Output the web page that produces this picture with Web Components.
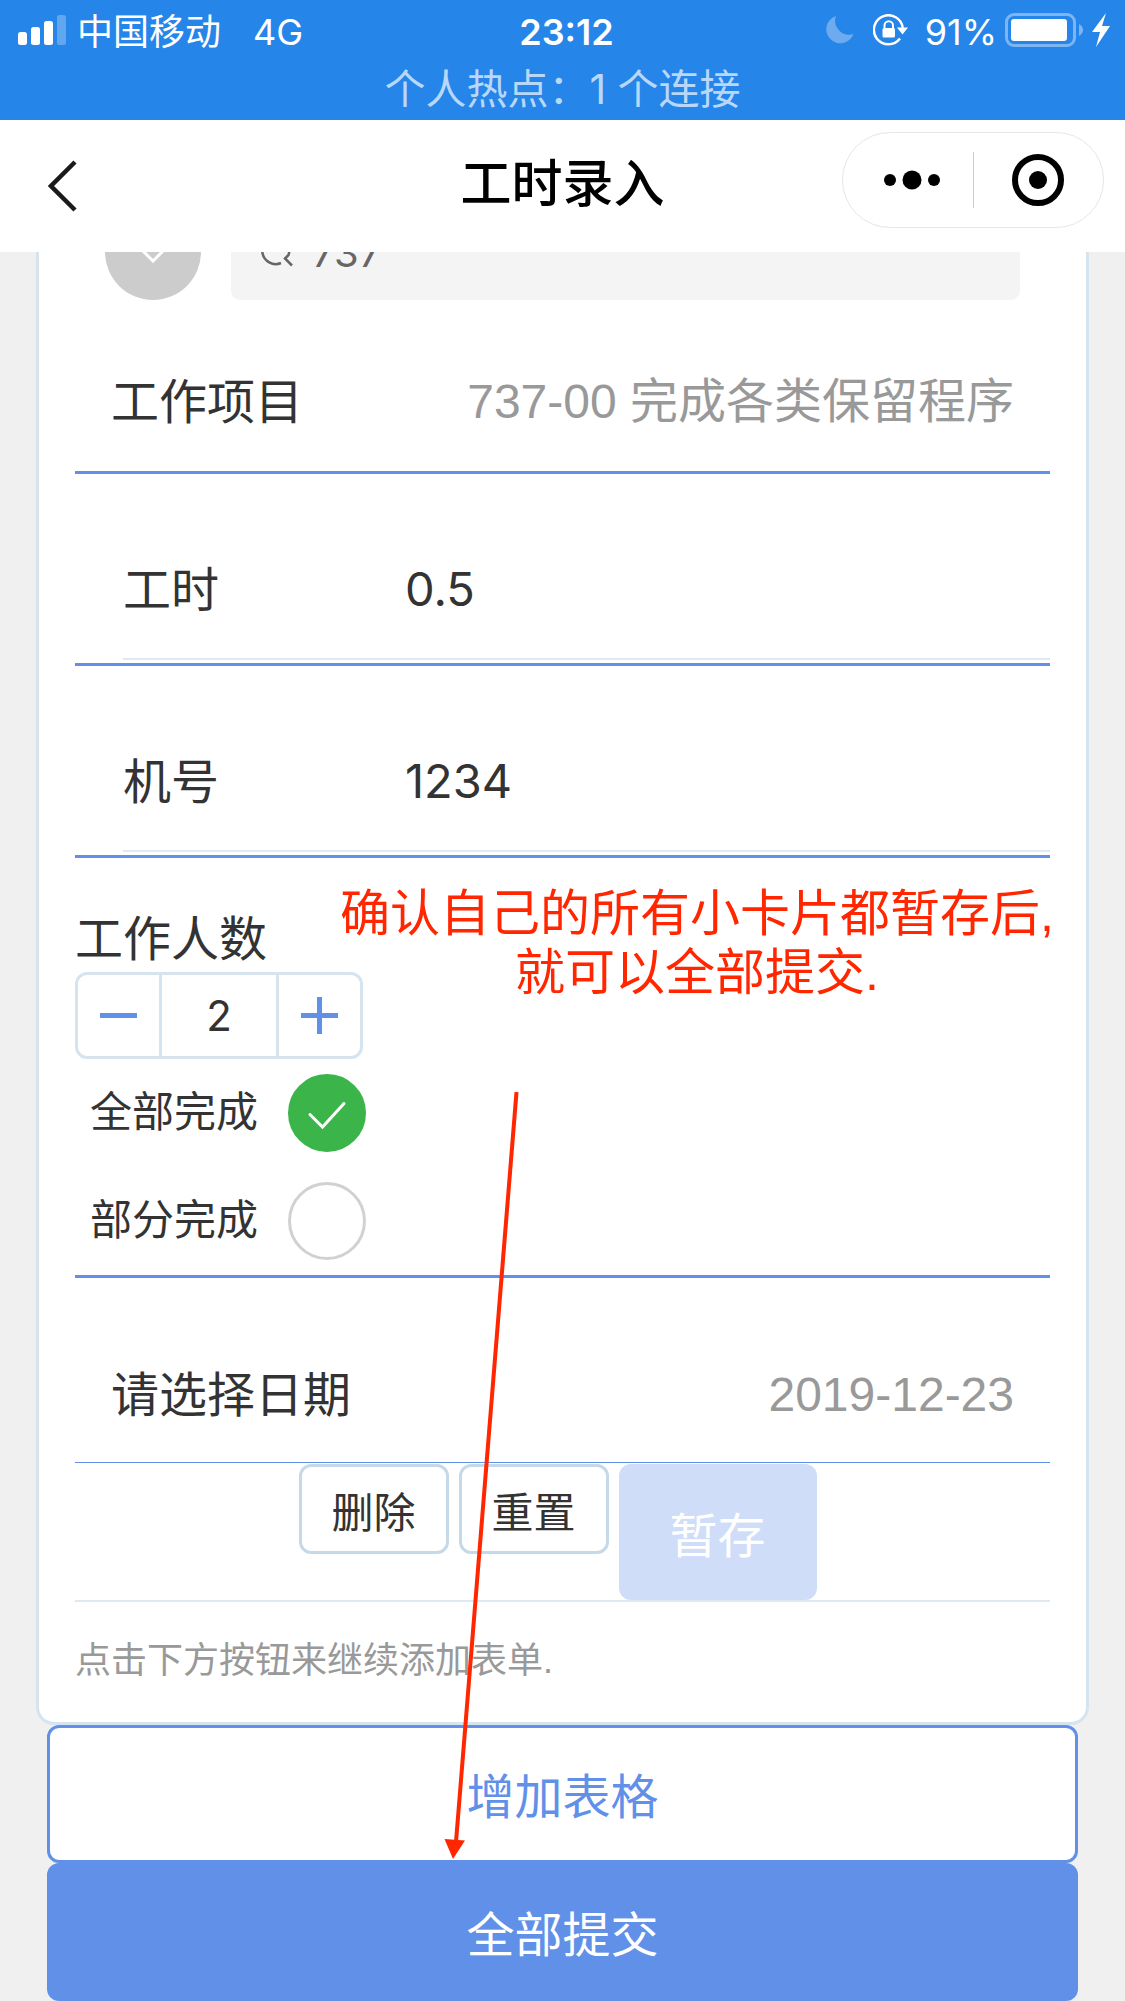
<!DOCTYPE html>
<html lang="zh-CN">
<head>
<meta charset="utf-8">
<meta name="viewport" content="width=device-width, initial-scale=1">
<title>工时录入</title>
<style>
  :root {
    --primary: #6190e8;
    --line: #d6e4ef;
    --text: #333;
    --muted: #999;
  }
  html, body { margin: 0; background: #f0f0f0; }
  body { font-family: Inter, "Noto Sans CJK SC", sans-serif; color: var(--text); }
</style>
</head>
<body>
<work-app></work-app>

<script>
const base = `
  *, *::before, *::after { box-sizing: border-box; }
  :host { display: block; }
  :host([hidden]) { display: none; }
  button, input, select { font: inherit; color: inherit; margin: 0; padding: 0; border: 0; background: none; border-radius: 0; outline: 0; appearance: none; }
  svg { display: block; flex: none; }
`;
function define(name, css, html) {
  const template = document.createElement('template');
  template.innerHTML = `<style>${base}${css}</style>${html}`;
  customElements.define(name, class extends HTMLElement {
    constructor() {
      super();
      this.attachShadow({ mode: 'open' }).append(template.content.cloneNode(true));
    }
    connectedCallback() {
      this.shadowRoot.querySelectorAll('[data-value]').forEach(el => {
        el.value = this.getAttribute('value') || '';
      });
      const option = this.shadowRoot.querySelector('option');
      if (option) option.textContent = this.getAttribute('value');
    }
  });
}

define('status-bar', `
  :host { background: #2585e9; color: #fff; height: 120px; }
  .row { display: grid; grid-template-columns: 1fr auto 1fr; align-items: center; height: 60px; padding: 0 14px 0 18px; font-size: 36px; line-height: 48px; }
  .side { display: flex; align-items: center; }
  .side span, b { padding-top: 3px; }
  b { padding-left: 4px; }
  .net { margin-left: 32px; }
  .carrier { margin-left: 11px; }
  .right { justify-content: flex-end; }
  .pct { margin: 0 8px 0 16px; }
  .lock { margin-left: 19px; }
  .bolt { margin-left: 8px; }
  b { font-weight: 600; }
  .hotspot { text-align: center; font-size: 41px; line-height: 58px; color: #b9d7f8; }
`, `
  <div class="row">
    <div class="side">
      <svg width="48" height="30" fill="#fff"><rect y="17" width="9" height="13" rx="2.5"/><rect x="13" y="12" width="9" height="18" rx="2.5"/><rect x="26" y="6" width="9" height="24" rx="2.5"/><rect x="39" width="9" height="30" rx="2.5" opacity=".28"/></svg>
      <span class="carrier">中国移动</span><span class="net">4G</span>
    </div>
    <b>23:12</b>
    <div class="side right">
      <svg width="28" height="28" viewBox="0 0 28 28"><path d="M10 0A14 14 0 1 0 27.500 18A14 14 0 0 1 10 0Z" fill="#6daaf0"/></svg>
      <svg class="lock" width="36" height="32" viewBox="0 0 36 32"><path d="M27 24.500A14.500 14.500 0 1 1 29.800 14" fill="none" stroke="#fff" stroke-width="2.500"/><path d="M24 13.500h11l-5.500 7z" fill="#fff"/><rect x="9.500" y="14" width="12.500" height="9.500" rx="1.500" fill="#fff"/><path d="M11.500 15v-3.500a4.250 4.250 0 0 1 8.500 0V15" fill="none" stroke="#fff" stroke-width="2"/></svg>
      <span class="pct">91%</span>
      <svg width="79" height="34" viewBox="0 0 79 34"><rect x="1.500" y="1.500" width="68" height="31" rx="7.500" fill="none" stroke="#7db4f2" stroke-width="3"/><rect x="6" y="6" width="56" height="22" rx="3" fill="#fff"/><path d="M74 11q4 2.500 4 6t-4 6z" fill="#7db4f2"/></svg>
      <svg class="bolt" width="19" height="34" viewBox="0 0 19 34"><path d="M14 0L0 19h8L4 34 18 13h-8z" fill="#fff"/></svg>
    </div>
  </div>
  <div class="hotspot">个人热点：1 个连接</div>
`);

define('nav-bar', `
  :host { background: #fff; }
  header { display: grid; grid-template-columns: 1fr auto 1fr; align-items: center; height: 132px; padding: 0 21px 12px; }
  h1 { margin: 0; padding-top: 7px; font-size: 51px; line-height: 72px; font-weight: 500; color: #000; }
  button { cursor: pointer; display: flex; align-items: center; justify-content: center; }
  .back { justify-self: start; padding: 12px 0 0 27px; }
  .capsule { justify-self: end; display: flex; align-items: center; width: 262px; height: 96px; border: 1px solid #e6e6e6; border-radius: 48px; }
  .capsule button { flex: 0 1 130px; height: 100%; }
  .capsule .more { padding-left: 8px; }
  .capsule i { flex: none; width: 1px; height: 56px; background: #ccc; }
`, `
  <header>
    <button class="back" aria-label="返回"><svg width="30" height="52" viewBox="0 0 30 52"><path d="M27 2L3 26l24 24" fill="none" stroke="#1a1a1a" stroke-width="4.500"/></svg></button>
    <h1>工时录入</h1>
    <div class="capsule">
      <button class="more" aria-label="更多"><svg width="58" height="20" viewBox="0 0 58 20"><circle cx="7" cy="10" r="6"/><circle cx="29" cy="10" r="9.500" /><circle cx="51" cy="10" r="6"/></svg></button>
      <i></i>
      <button aria-label="关闭"><svg width="52" height="52" viewBox="0 0 52 52"><circle cx="26" cy="26" r="23" fill="none" stroke="#000" stroke-width="6"/><circle cx="26" cy="26" r="9"/></svg></button>
    </div>
  </header>
`);

define('form-card', `
  :host { margin: 0 36px; padding: 36px; border: 3px solid var(--line); border-radius: 18px; background: #fff; }
`, `<slot></slot>`);

define('search-row', `
  :host { display: flex; gap: 30px; padding: 0 30px; }
  button { width: 96px; height: 96px; border-radius: 50%; background: #ccc; display: flex; align-items: center; justify-content: center; }
  label { flex: 1; min-width: 0; display: flex; align-items: center; gap: 15px; height: 96px; padding: 0 30px; border-radius: 9px; background: #f4f4f4; color: #666; font-size: 40px; }
  input { flex: 1; min-width: 0; height: 60px; }
`, `
  <button aria-label="展开"><svg width="36" height="22" viewBox="0 0 36 22"><path d="M6 8l12 12L30 8" fill="none" stroke="#fff" stroke-width="3"/></svg></button>
  <label><svg width="36" height="36" viewBox="0 0 36 36" fill="none" stroke="#666" stroke-width="2.500"><path d="M20 29A13.500 13.500 0 1 1 27.500 21L24 24.500l7 7"/></svg><input type="text" aria-label="搜索" data-value></label>
`);

define('picker-row', `
  :host { padding: 72px 36px 39px; border-bottom: 3px solid var(--primary); font-size: 48px; line-height: 60px; }
  label { display: flex; gap: 24px; }
  span { flex: none; }
  select { flex: 1; min-width: 0; height: 60px; text-align: right; text-align-last: right; color: var(--muted); opacity: 1; font-family: "Liberation Sans", "Noto Sans CJK SC", sans-serif; }
`, `<label><span><slot></slot></span><select><option></option></select></label>`);

define('date-row', `
  :host { padding: 87px 36px 37px; font-size: 48px; line-height: 60px; }
  label { display: flex; gap: 24px; }
  span { flex: none; }
  input { flex: 1; min-width: 0; height: 60px; text-align: right; color: var(--muted); font-family: "Liberation Sans", "Noto Sans CJK SC", sans-serif; }
`, `<label><span><slot></slot></span><input type="text" readonly data-value></label>`);

define('input-row', `
  :host { border-bottom: 3px solid var(--primary); padding: 0 0 3px 48px; font-size: 48px; line-height: 60px; }
  label { display: flex; padding: 86px 0 38px; border-bottom: 2px solid #dfe9f1; }
  span { width: 282px; flex: none; }
  input { flex: 1; min-width: 0; height: 58px; font-size: 47px; }
`, `<label><span><slot></slot></span><input type="text" data-value></label>`);

define('number-stepper', `
  :host { padding-top: 51px; font-size: 48px; line-height: 60px; }
  label { display: block; margin-bottom: 3px; }
  .box { display: inline-flex; height: 87px; border: 3px solid var(--line); border-radius: 12px; vertical-align: top; }
  button { width: 81px; display: flex; align-items: center; justify-content: center; }
  input { width: 120px; text-align: center; font-size: 42px; border: solid var(--line); border-width: 0 3px; }
  path { stroke: var(--primary); stroke-width: 5; }
`, `
  <label for="count"><slot></slot></label>
  <div class="box">
    <button aria-label="减少"><svg width="37" height="37"><path d="M0 18.500h37"/></svg></button>
    <input id="count" type="text" data-value>
    <button aria-label="增加"><svg width="37" height="37"><path d="M0 18.500h37M18.500 0v37"/></svg></button>
  </div>
`);

define('status-choice', `
  :host { border-bottom: 3px solid var(--primary); font-size: 42px; line-height: 60px; }
  label { display: flex; align-items: center; gap: 30px; height: 108px; padding-left: 15px; }
  span { padding-bottom: 2px; }
  .mark { display: grid; }
  .mark > * { grid-area: 1 / 1; width: 78px; height: 78px; }
  input { border: 3px solid #d1d1d1; border-radius: 50%; background: #fff; }
  input:checked { background: #3bb54a; border-color: #3bb54a; }
  svg { visibility: hidden; pointer-events: none; }
  input:checked + svg { visibility: visible; }
  path { fill: none; stroke: #fff; stroke-width: 3; stroke-linecap: round; }
`, `
  <label><span>全部完成</span><div class="mark"><input type="radio" name="state" checked><svg viewBox="0 0 78 78"><path d="M22 40.500L34.500 53 56 29.500"/></svg></div></label>
  <label><span>部分完成</span><div class="mark"><input type="radio" name="state"><svg viewBox="0 0 78 78"><path d="M22 40.500L34.500 53 56 29.500"/></svg></div></label>
`);

define('action-row', `
  :host { border-top: 1px solid var(--primary); border-bottom: 2px solid #dfe9f1; padding: 1px 10px 0 0; display: flex; justify-content: center; align-items: flex-start; gap: 10px; }
  button { width: 150px; height: 90px; border: 3px solid #c5d9e8; border-radius: 12px; font-size: 42px; }
  .save { width: 198px; height: 136px; border: 0; background: #cfddf8; color: #fff; font-size: 48px; }
`, `<button>删除</button><button>重置</button><button class="save" disabled>暂存</button>`);

define('wide-button', `
  :host { margin: 0 47px; }
  button { width: 100%; height: 138px; display: block; padding-bottom: 2px; border: 3px solid var(--primary); border-radius: 12px; font-size: 48px; background: #fff; color: var(--primary); }
  :host([filled]) button { background: var(--primary); color: #fff; }
`, `<button><slot></slot></button>`);

define('guide-note', `
  :host { position: absolute; left: 340px; top: 633px; width: 714px; color: #ff2600; pointer-events: none; }
  p { margin: 0; text-align: center; font: 50px/59px "Liberation Sans", "Noto Sans CJK SC", sans-serif; }
  svg { margin: 89px 0 0 102px; }
`, `
  <p>确认自己的所有小卡片都暂存后,<br>就可以全部提交.</p>
  <svg width="80" height="768" viewBox="0 0 80 768"><path d="M74.500 0L14 750" stroke="#ff2600" stroke-width="4"/><path d="M2.500 747l20.500 1.500L11 767z" fill="#ff2600"/></svg>
`);

define('work-app', `
  main { position: relative; overflow: hidden; }
  form-card { margin-top: -87px; padding-bottom: 24px; }
  .hint { margin: 0; padding: 35px 0 13px; font-size: 36px; line-height: 48px; color: var(--muted); font-family: "Liberation Sans", "Noto Sans CJK SC", sans-serif; }
`, `
  <status-bar></status-bar>
  <nav-bar></nav-bar>
  <main>
    <form-card>
      <search-row value="737"></search-row>
      <picker-row value="737-00 完成各类保留程序">工作项目</picker-row>
      <input-row value="0.5">工时</input-row>
      <input-row value="1234">机号</input-row>
      <number-stepper value="2">工作人数</number-stepper>
      <status-choice></status-choice>
      <date-row value="2019-12-23">请选择日期</date-row>
      <action-row></action-row>
      <p class="hint">点击下方按钮来继续添加表单.</p>
    </form-card>
    <wide-button>增加表格</wide-button>
    <wide-button filled>全部提交</wide-button>
    <guide-note></guide-note>
  </main>
`);
</script>
</body>
</html>
